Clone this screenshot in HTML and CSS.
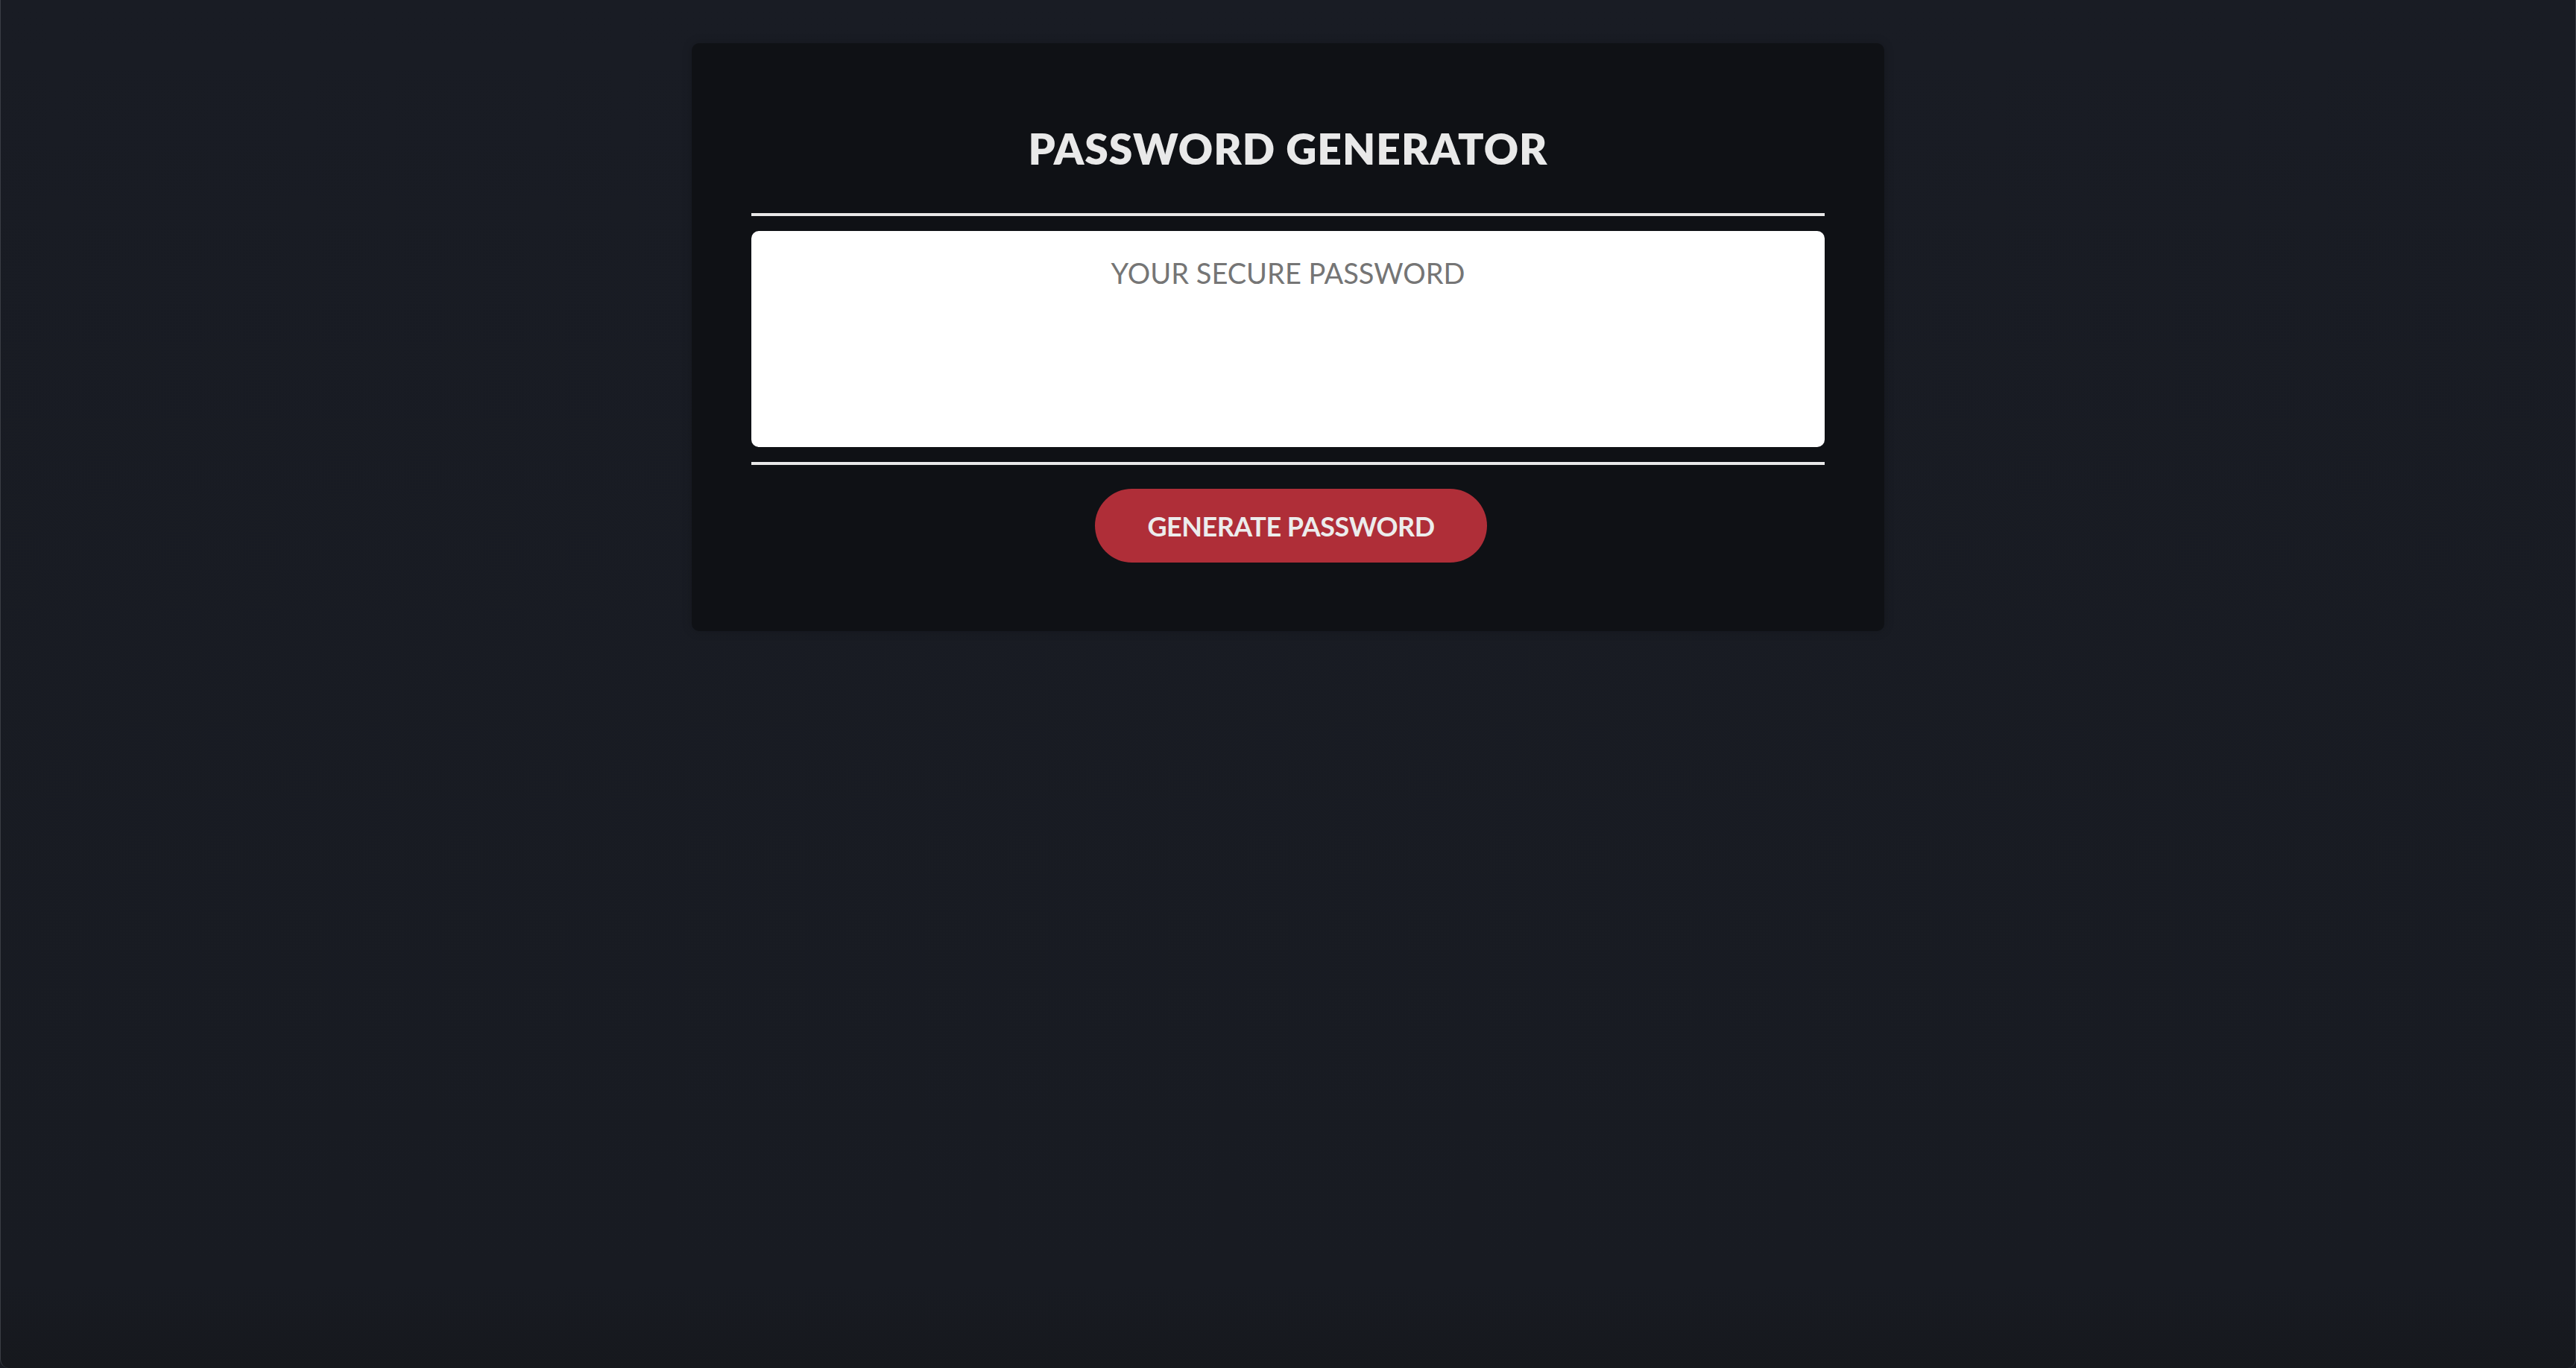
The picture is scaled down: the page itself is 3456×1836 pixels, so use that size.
FILE: index.html
```html
<!DOCTYPE html>
<html lang="en">
<head>
<meta charset="utf-8">
<title>Password Generator</title>
<link rel="stylesheet" href="styles.css">
</head>
<body>
<div class="screen">
  <main class="card">
    <h1 class="title">PASSWORD GENERATOR</h1>
    <hr class="rule rule-top">
    <textarea class="output" placeholder="YOUR SECURE PASSWORD" readonly></textarea>
    <hr class="rule rule-bottom">
    <button class="generate" type="button">GENERATE PASSWORD</button>
  </main>
</div>
</body>
</html>
```

FILE: styles.css
```css
html, body {
  margin: 0;
  padding: 0;
  height: 100%;
  background: #181b22;
}

.screen {
  box-sizing: border-box;
  height: 100%;
  display: flex;
  flex-direction: column;
  align-items: center;
  padding-top: 58px;
  border-left: 1px solid #3b3e45;
  border-right: 1px solid #3b3e45;
  border-radius: 0 0 12px 12px;
  background: linear-gradient(to bottom, #191c24 0%, #181b22 94%, #16181d 100%);
  font-family: Lato, "Open Sans", sans-serif;
}

.card {
  box-sizing: border-box;
  width: 1600px;
  padding: 113px 80px 92px;
  background: #0f1115;
  border-radius: 10px;
  box-shadow: 0 0 14px rgba(0, 0, 0, 0.18);
  display: flex;
  flex-direction: column;
}

.title {
  margin: 0;
  font-family: Lato, sans-serif;
  font-weight: 800;
  font-size: 57px;
  line-height: 57px;
  color: #e9e9e9;
  text-align: center;
  letter-spacing: 1px;
}

.rule {
  margin: 0;
  border: 0;
  height: 4px;
  background: #e8e8e8;
}

.rule-top {
  margin-top: 58px;
}

.output {
  box-sizing: border-box;
  margin-top: 20px;
  height: 290px;
  width: 100%;
  resize: none;
  border: 0;
  outline: none;
  border-radius: 10px;
  background: #ffffff;
  padding: 34px 20px 0;
  font-family: Lato, sans-serif;
  font-size: 38px;
  line-height: 1.2;
  text-align: center;
  color: #333;
}

.output::placeholder {
  color: #757575;
  opacity: 1;
}

.rule-bottom {
  margin-top: 20px;
}

.generate {
  align-self: center;
  margin-top: 32px;
  margin-left: 8px;
  height: 99px;
  padding: 0 70px;
  border: 0;
  border-radius: 50px;
  background: #af2e38;
  color: #ececec;
  font-family: Lato, sans-serif;
  font-weight: 700;
  font-size: 36px;
  line-height: 1;
  letter-spacing: -0.5px;
  cursor: pointer;
}
```
